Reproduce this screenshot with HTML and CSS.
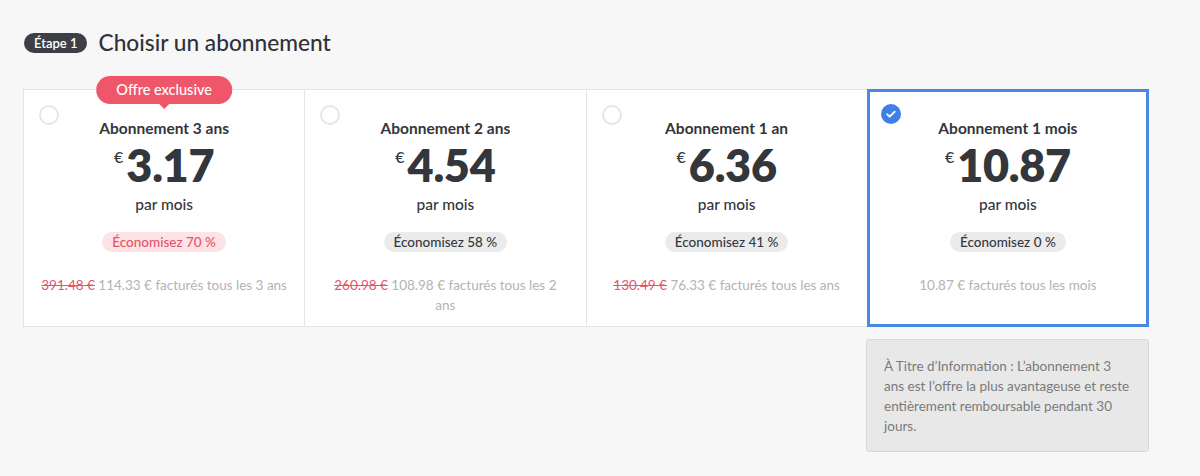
FILE: index.html
```html
<!DOCTYPE html>
<html lang="fr">
<head>
<meta charset="utf-8">
<link rel="stylesheet" href="styles.css">
</head>
<body>
<div class="page">
  <div class="header">
    <span class="step">Étape 1</span>
    <h1 class="title">Choisir un abonnement</h1>
  </div>
  <div class="plans">
    <div class="card">
      <span class="radio"></span>
      <span class="offer">Offre exclusive</span>
      <div class="plan-name">Abonnement 3 ans</div>
      <div class="price"><span class="cur">€</span><span class="amount">3.17</span></div>
      <div class="per">par mois</div>
      <div class="save save-hot">Économisez 70 %</div>
      <div class="bill"><s class="old">391.48 €</s> 114.33 € facturés tous les 3 ans</div>
    </div>
    <div class="card">
      <span class="radio"></span>
      <div class="plan-name">Abonnement 2 ans</div>
      <div class="price"><span class="cur">€</span><span class="amount">4.54</span></div>
      <div class="per">par mois</div>
      <div class="save">Économisez 58 %</div>
      <div class="bill"><s class="old">260.98 €</s> 108.98 € facturés tous les 2<br>ans</div>
    </div>
    <div class="card">
      <span class="radio"></span>
      <div class="plan-name">Abonnement 1 an</div>
      <div class="price"><span class="cur">€</span><span class="amount">6.36</span></div>
      <div class="per">par mois</div>
      <div class="save">Économisez 41 %</div>
      <div class="bill"><s class="old">130.49 €</s> 76.33 € facturés tous les ans</div>
    </div>
    <div class="card card-selected">
      <span class="check"><svg viewBox="0 0 20 20" width="20" height="20"><circle cx="10" cy="10" r="10" fill="#3f80e8"/><path d="M6.2 10.3l2.5 2.4 5-5" fill="none" stroke="#fff" stroke-width="1.8" stroke-linecap="round" stroke-linejoin="round"/></svg></span>
      <div class="plan-name">Abonnement 1 mois</div>
      <div class="price"><span class="cur">€</span><span class="amount">10.87</span></div>
      <div class="per">par mois</div>
      <div class="save">Économisez 0 %</div>
      <div class="bill">10.87 € facturés tous les mois</div>
    </div>
  </div>
  <div class="info-row">
    <div class="info">À Titre d’Information : L’abonnement 3 ans est l’offre la plus avantageuse et reste entièrement remboursable pendant 30 jours.</div>
  </div>
</div>
</body>
</html>
```

FILE: styles.css
```css
html, body {
  margin: 0;
  padding: 0;
  background: #f7f7f7;
  font-family: Lato, "Open Sans", sans-serif;
  color: #33363b;
}
.page {
  padding: 32px 0 0 23px;
  width: 1126px;
}
.header {
  display: flex;
  align-items: center;
  gap: 12px;
  margin-left: 1px;
}
.step {
  background: #3c3f45;
  color: #fff;
  font-size: 13px;
  font-weight: 600;
  line-height: 20px;
  height: 20px;
  padding: 0 9px 0 10px;
  border-radius: 10px;
}
.title {
  margin: 0;
  font-size: 22.7px;
  font-weight: 500;
  line-height: 22px;
  color: #2f3237;
}
.plans {
  display: flex;
  margin-top: 35px;
}
.card {
  flex: 1;
  position: relative;
  box-sizing: border-box;
  background: #fff;
  border: 1px solid #e4e4e4;
  margin-left: -1px;
  height: 238px;
  text-align: center;
  padding: 27px 14px 0;
}
.card:first-child { margin-left: 0; }
.card-selected {
  border-color: #4a88e6;
  box-shadow: inset 0 0 0 2px #4a88e6;
  z-index: 1;
}
.radio {
  position: absolute;
  left: 15px;
  top: 15px;
  width: 16px;
  height: 16px;
  border: 2px solid #e6e6e6;
  border-radius: 50%;
}
.check {
  position: absolute;
  left: 13px;
  top: 14px;
  width: 20px;
  height: 20px;
}
.check svg { display: block; }
.offer {
  position: absolute;
  top: -14px;
  left: 50%;
  transform: translateX(-50%);
  background: #f0566a;
  color: #fff;
  font-size: 14.5px;
  font-weight: 500;
  line-height: 28px;
  height: 28px;
  padding: 0 20px;
  border-radius: 14px;
  white-space: nowrap;
}
.offer::after {
  content: "";
  position: absolute;
  left: 50%;
  bottom: -5px;
  margin-left: -6px;
  border-left: 6px solid transparent;
  border-right: 6px solid transparent;
  border-top: 6px solid #f0566a;
}
.plan-name {
  font-size: 15.5px;
  font-weight: 700;
  line-height: 22px;
}
.price {
  display: flex;
  justify-content: center;
  align-items: flex-start;
  margin-top: 4px;
  height: 44px;
}
.cur {
  font-size: 16px;
  line-height: 16px;
  margin-top: 6px;
  margin-right: 3px;
  font-weight: 500;
}
.amount {
  font-size: 45px;
  font-weight: 800;
  line-height: 44px;
  letter-spacing: -0.3px;
}
.per {
  font-size: 15.5px;
  font-weight: 500;
  line-height: 20px;
  margin-top: 7px;
}
.save {
  display: inline-block;
  margin-top: 18px;
  background: #ebebeb;
  color: #35383d;
  font-size: 13.5px;
  font-weight: 500;
  line-height: 20px;
  padding: 0 10px;
  border-radius: 10px;
}
.save-hot {
  background: #fde2e6;
  color: #e5556a;
}
.bill {
  margin-top: 23px;
  font-size: 13.5px;
  line-height: 20px;
  color: #b3b3b3;
}
.old {
  color: #e5556a;
}
.info-row {
  display: flex;
  justify-content: flex-end;
  margin-top: 12px;
}
.info {
  width: 246px;
  background: #e8e8e8;
  border: 1px solid #d9d9d9;
  border-radius: 3px;
  padding: 16px 18px 15px 17px;
  font-size: 13.5px;
  line-height: 20px;
  color: #7a7a7a;
}
```
